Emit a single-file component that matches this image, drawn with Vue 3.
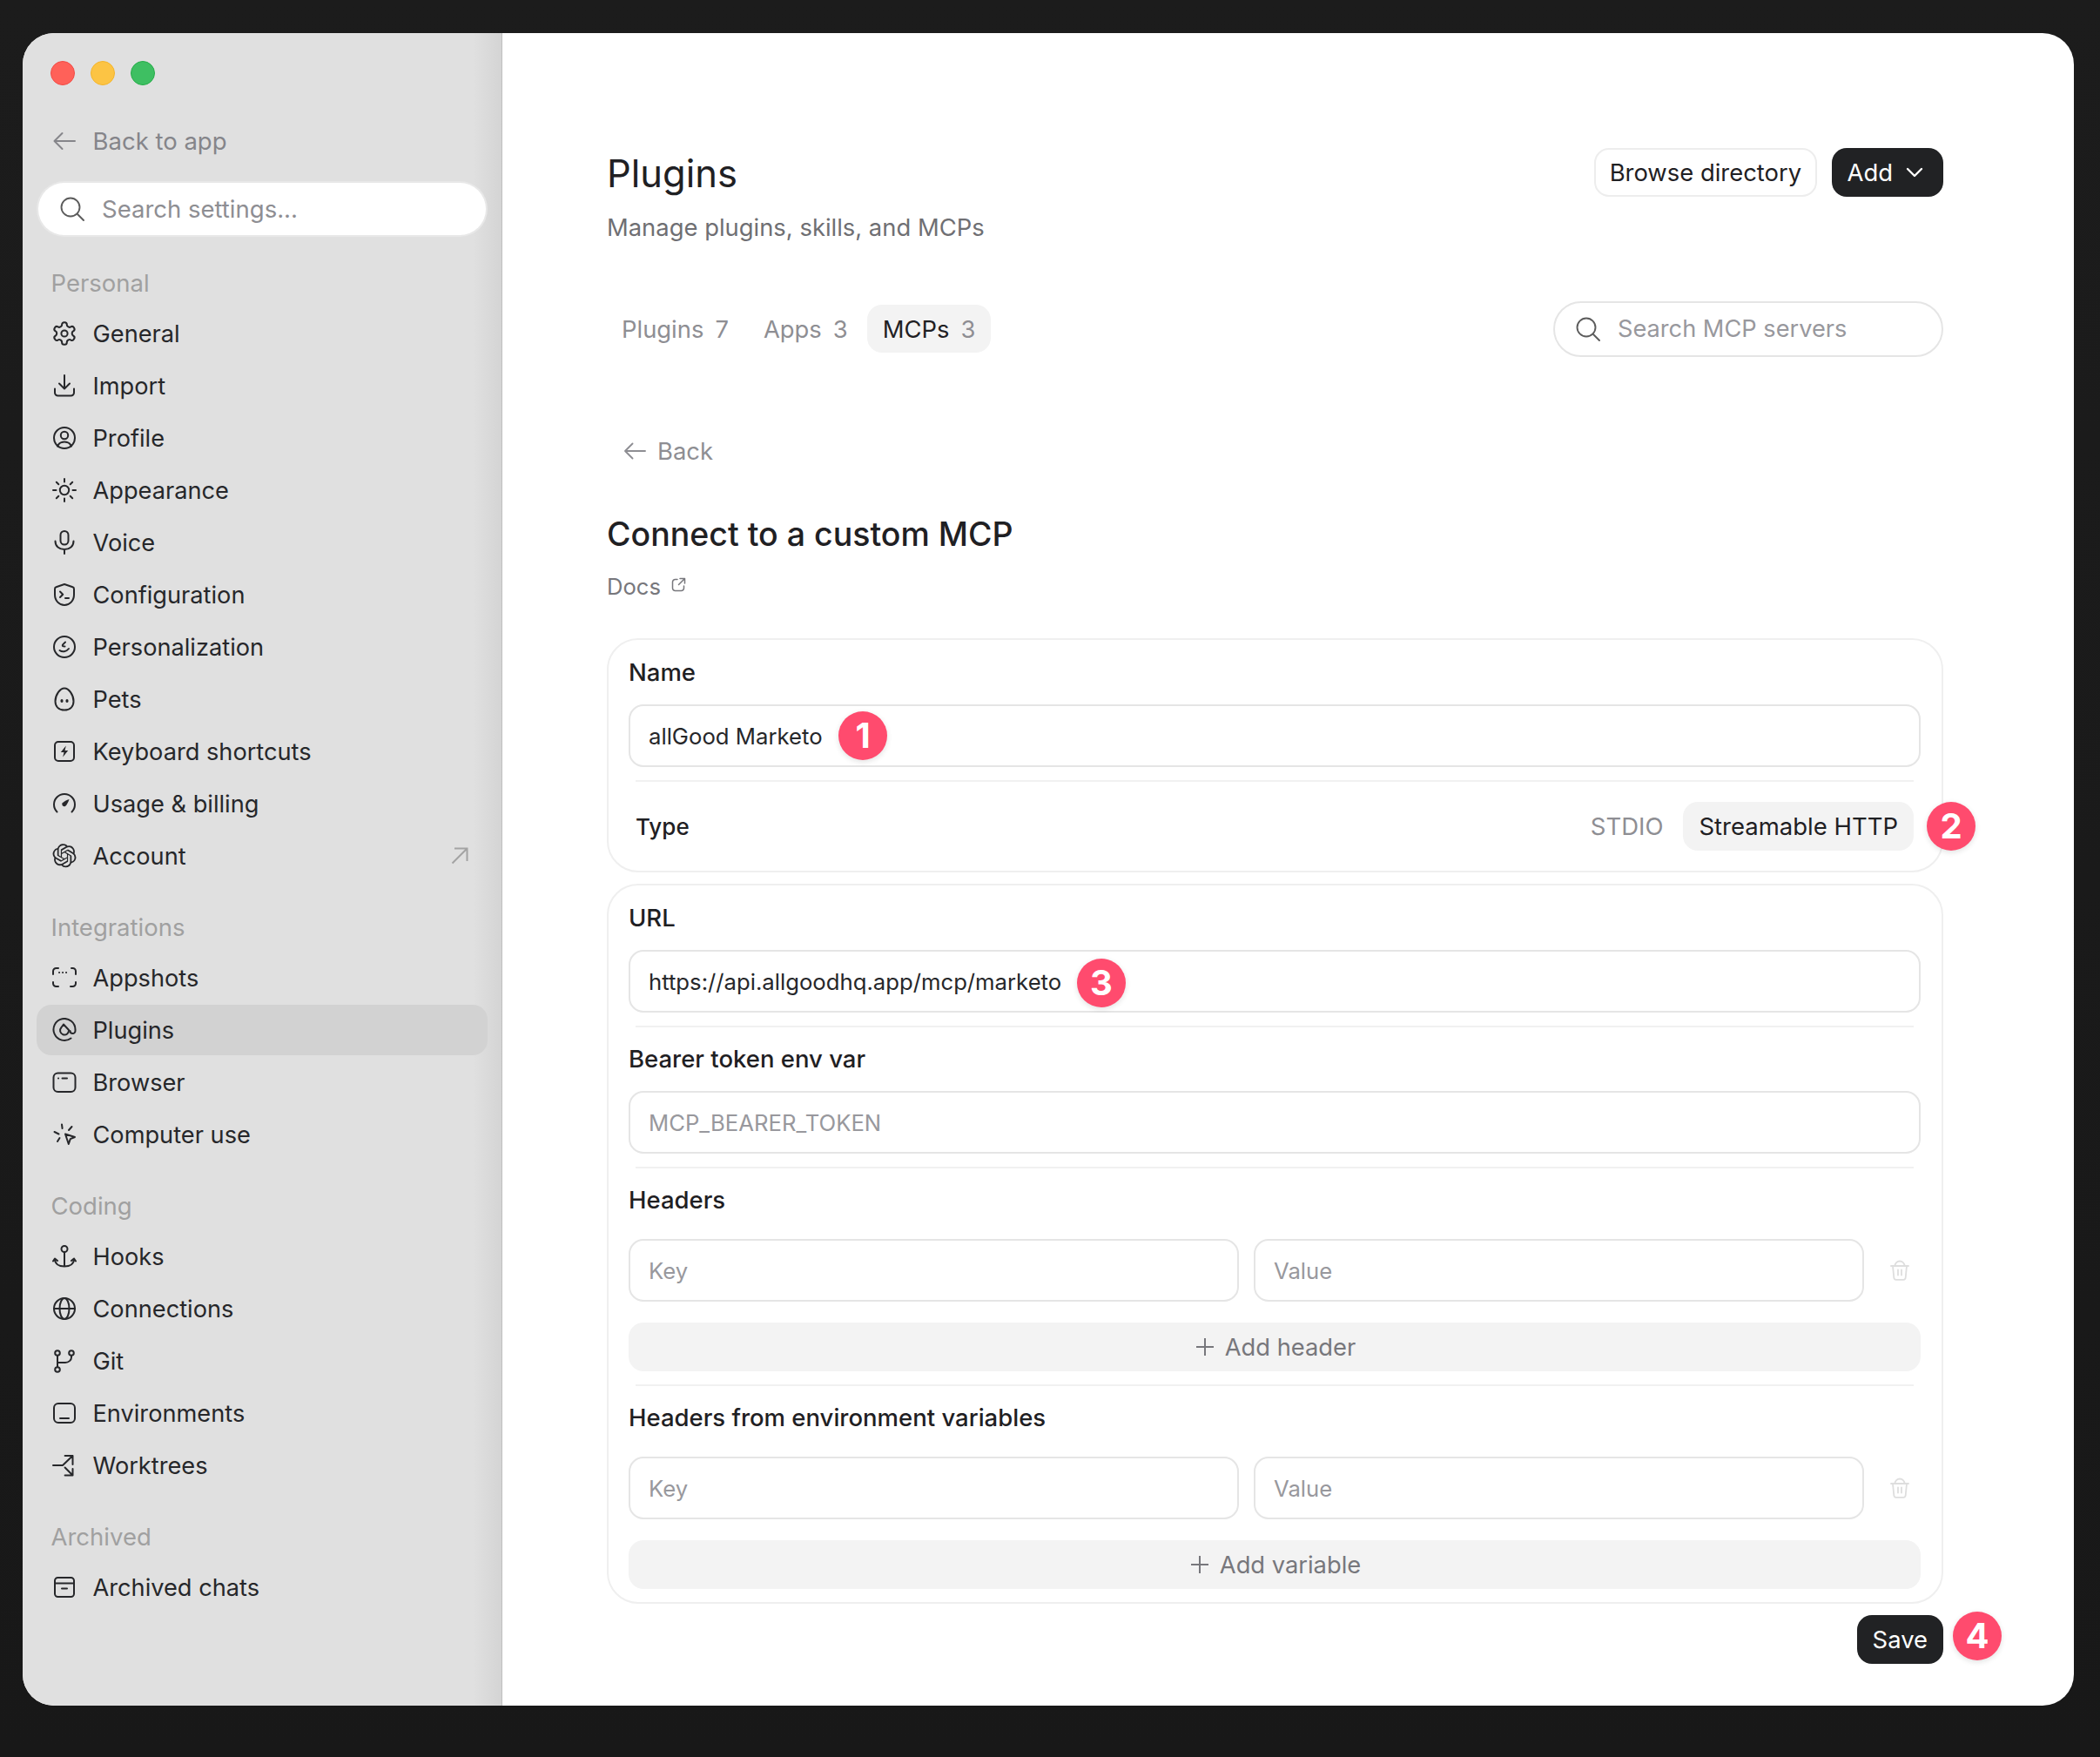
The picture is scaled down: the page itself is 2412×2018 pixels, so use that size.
<script setup>
const icons = {
  general: '<path d="M12.22 2h-.44a2 2 0 0 0-2 2v.18a2 2 0 0 1-1 1.73l-.43.25a2 2 0 0 1-2 0l-.15-.08a2 2 0 0 0-2.73.73l-.22.38a2 2 0 0 0 .73 2.73l.15.1a2 2 0 0 1 1 1.72v.51a2 2 0 0 1-1 1.74l-.15.09a2 2 0 0 0-.73 2.73l.22.38a2 2 0 0 0 2.73.73l.15-.08a2 2 0 0 1 2 0l.43.25a2 2 0 0 1 1 1.73V20a2 2 0 0 0 2 2h.44a2 2 0 0 0 2-2v-.18a2 2 0 0 1 1-1.73l.43-.25a2 2 0 0 1 2 0l.15.08a2 2 0 0 0 2.73-.73l.22-.39a2 2 0 0 0-.73-2.73l-.15-.08a2 2 0 0 1-1-1.74v-.5a2 2 0 0 1 1-1.74l.15-.09a2 2 0 0 0 .73-2.73l-.22-.38a2 2 0 0 0-2.73-.73l-.15.08a2 2 0 0 1-2 0l-.43-.25a2 2 0 0 1-1-1.73V4a2 2 0 0 0-2-2z" transform="translate(-1.4 -1.4) scale(1.28)" stroke-width="1.6"/><circle cx="14" cy="14" r="3.6"/>',
  import: '<path d="M14 2v15M8 11.5l6 6 6-6M3 17.5V22a3.5 3.5 0 0 0 3.5 3.5h15A3.5 3.5 0 0 0 25 22v-4.5"/>',
  profile: '<circle cx="14" cy="14" r="12"/><circle cx="14" cy="11" r="4.2"/><path d="M6 23.5c1.5-3.5 4.5-5 8-5s6.5 1.5 8 5"/>',
  appearance: '<circle cx="14" cy="14" r="5.2"/><path d="M14 1v3.5M14 23.5V27M1 14h3.5M23.5 14H27M4.8 4.8l2.5 2.5M20.7 20.7l2.5 2.5M4.8 23.2l2.5-2.5M20.7 7.3l2.5-2.5"/>',
  voice: '<rect x="9.5" y="1" width="9" height="15.5" rx="4.5"/><path d="M3.5 12.5c0 6 4.5 9.5 10.5 9.5s10.5-3.5 10.5-9.5M14 22v5"/>',
  config: '<path d="M14 2l9.5 3.2c1 .3 1.5 1.2 1.5 2.2V14c0 7-5 12-11 12S3 21 3 14V7.4c0-1 .5-1.9 1.5-2.2z"/><path d="M9 10.5l3.2 3.2L9 17M15 18h4"/>',
  personal: '<circle cx="14" cy="14" r="12"/><path d="M15 8.5c-1.5 1.3-3.2 2.6-3.2 3.8 0 .8 1.2 1.2 2.7 1.2M8.5 18c3 2.2 7.5 1.8 10.5-2"/>',
  pets: '<path d="M14 1.5c5 0 10.5 7.5 10.5 15 0 6.5-4.5 10-10.5 10S3.5 23 3.5 16.5C3.5 9 9 1.5 14 1.5z"/><ellipse cx="11" cy="16" rx="1.6" ry="2" fill="currentColor" stroke="none"/><ellipse cx="17" cy="16" rx="1.6" ry="2" fill="currentColor" stroke="none"/>',
  keyboard: '<rect x="3" y="3" width="22" height="22" rx="4"/><path d="M15.8 7.5l-6 7.5h3.7l-1.3 5.5 6-7.5h-3.700z" fill="currentColor" stroke="none"/>',
  usage: '<path d="M5.5 23.5A12 12 0 1 1 22.5 23.5"/><path d="M19.5 9c-3 1-6 2.5-7.7 4.2a2.5 2.5 0 0 0 3.5 3.5c1.700-1.700 3.200-4.700 4.200-7.700z" fill="currentColor" stroke="none"/>',
  account: '<path transform="translate(.5 .2) scale(1.125)" fill="currentColor" stroke="none" d="M22.2819 9.8211a5.9847 5.9847 0 0 0-.5157-4.9108 6.0462 6.0462 0 0 0-6.5098-2.9A6.0651 6.0651 0 0 0 4.9807 4.1818a5.9847 5.9847 0 0 0-3.9977 2.9 6.0462 6.0462 0 0 0 .7427 7.0966 5.98 5.98 0 0 0 .511 4.9107 6.051 6.051 0 0 0 6.5146 2.9001A5.9847 5.9847 0 0 0 13.2599 24a6.0557 6.0557 0 0 0 5.7718-4.2058 5.9894 5.9894 0 0 0 3.9977-2.9001 6.0557 6.0557 0 0 0-.7475-7.0729zm-9.022 12.6081a4.4755 4.4755 0 0 1-2.8764-1.0408l.1419-.0804 4.7783-2.7582a.7948.7948 0 0 0 .3927-.6813v-6.7369l2.02 1.1686a.071.071 0 0 1 .038.052v5.5826a4.504 4.504 0 0 1-4.4945 4.4944zm-9.6607-4.1254a4.4708 4.4708 0 0 1-.5346-3.0137l.142.0852 4.783 2.7582a.7712.7712 0 0 0 .7806 0l5.8428-3.3685v2.3324a.0804.0804 0 0 1-.0332.0615L9.74 19.9502a4.4992 4.4992 0 0 1-6.1408-1.6464zM2.3408 7.8956a4.485 4.485 0 0 1 2.3655-1.9728V11.6a.7664.7664 0 0 0 .3879.6765l5.8144 3.3543-2.0201 1.1685a.0757.0757 0 0 1-.071 0l-4.8303-2.7865A4.504 4.504 0 0 1 2.3408 7.872zm16.5963 3.8558L13.1038 8.364 15.1192 7.2a.0757.0757 0 0 1 .071 0l4.8303 2.7913a4.4944 4.4944 0 0 1-.6765 8.1042v-5.6772a.79.79 0 0 0-.407-.667zm2.0107-3.0231l-.142-.0852-4.7735-2.7818a.7759.7759 0 0 0-.7854 0L9.409 9.2297V6.8974a.0662.0662 0 0 1 .0284-.0615l4.8303-2.7866a4.4992 4.4992 0 0 1 6.6802 4.66zM8.3065 12.863l-2.02-1.1638a.0804.0804 0 0 1-.038-.0567V6.0742a4.4992 4.4992 0 0 1 7.3757-3.4537l-.142.0805L8.704 5.459a.7948.7948 0 0 0-.3927.6813zm1.0976-2.3654l2.602-1.4998 2.6069 1.4998v2.9994l-2.5974 1.4997-2.6067-1.4997Z"/>',
  appshots: '<path d="M1 10V6.500A3.500 3.500 0 0 1 4.500 3H7M22 3h1.500A3.500 3.500 0 0 1 27 6.500V10M1 19v1.500A3.500 3.500 0 0 0 4.500 24H7M21 24h2.500a3.500 3.500 0 0 0 3.500-3.500V19"/><path d="M8 8h.1M12 8h.1M16 8h.1"/>',
  plugins: '<path d="M21.500 23.500A12.500 12.500 0 1 1 26.500 13.500v1.500a3 3 0 0 1-6 0"/><path d="M13 7.500l-2.500 3.500a5 5 0 1 0 8.500 3l-6-6.500z"/>',
  browser: '<rect x="1.5" y="3.5" width="25" height="21.5" rx="5"/><path d="M7 9.500h.1M11.500 9.500h5.500"/>',
  computer: '<path d="M15 13.500l11 3.500-5.200 2.200-2 5.800z"/><path d="M11 2.500l.6 4.500M22.500 5l-3.500 4M2.500 11l5 2.500M6 22l2.500-4"/>',
  hooks: '<circle cx="14" cy="5.5" r="3.5"/><path d="M14 9v16.500M3 17c0 5 4 8.500 11 8.500s11-3.500 11-8.500M1 19.500L3 16.500l3 2.500M22 19l3-2.500 2 3"/>',
  connections: '<circle cx="14" cy="14" r="12"/><ellipse cx="14" cy="14" rx="5.5" ry="12"/><path d="M2 14h24"/>',
  git: '<circle cx="6" cy="5" r="2.8"/><circle cx="6" cy="24" r="2.8"/><circle cx="22" cy="5" r="2.8"/><path d="M6 8v13M6 16h9c4 0 7-3 7-6V8"/>',
  environments: '<rect x="2" y="3" width="24" height="22" rx="5"/><path d="M9 20h10"/>',
  worktrees: '<path d="M1 14h11L23.500 3M14.600 3h8.900v10M14.600 16.500l8.900 9M23.500 18v7.500h-8.900"/>',
  archived: '<rect x="3" y="3" width="22" height="22" rx="3.5"/><path d="M3 9.500h22M11 15.500h6"/>',
}

const groups = [
  { label: 'Personal', items: [
    { text: 'General', icon: 'general' },
    { text: 'Import', icon: 'import' },
    { text: 'Profile', icon: 'profile' },
    { text: 'Appearance', icon: 'appearance' },
    { text: 'Voice', icon: 'voice' },
    { text: 'Configuration', icon: 'config' },
    { text: 'Personalization', icon: 'personal' },
    { text: 'Pets', icon: 'pets' },
    { text: 'Keyboard shortcuts', icon: 'keyboard' },
    { text: 'Usage & billing', icon: 'usage' },
    { text: 'Account', icon: 'account', external: true },
  ] },
  { label: 'Integrations', items: [
    { text: 'Appshots', icon: 'appshots' },
    { text: 'Plugins', icon: 'plugins', active: true },
    { text: 'Browser', icon: 'browser' },
    { text: 'Computer use', icon: 'computer' },
  ] },
  { label: 'Coding', items: [
    { text: 'Hooks', icon: 'hooks' },
    { text: 'Connections', icon: 'connections' },
    { text: 'Git', icon: 'git' },
    { text: 'Environments', icon: 'environments' },
    { text: 'Worktrees', icon: 'worktrees' },
  ] },
  { label: 'Archived', items: [
    { text: 'Archived chats', icon: 'archived' },
  ] },
]

const tabs = [
  { text: 'Plugins', count: 7 },
  { text: 'Apps', count: 3 },
  { text: 'MCPs', count: 3, active: true },
]

const envSections = [
  { label: 'Headers', add: 'Add header' },
  { label: 'Headers from environment variables', add: 'Add variable' },
]
</script>

<template>
  <div class="window">
    <aside class="sidebar">
      <div class="lights">
        <span class="light red"></span>
        <span class="light yellow"></span>
        <span class="light green"></span>
      </div>

      <div class="back-app">
        <svg class="ico" viewBox="0 0 28 28"><path d="M26 14H2.500M11.500 5l-9 9 9 9" /></svg>
        <span>Back to app</span>
      </div>

      <div class="side-search">
        <svg class="search-ico" viewBox="0 0 28 28"><circle cx="12" cy="12" r="10.5" /><path d="M20 20l7 7" /></svg>
        <span>Search settings...</span>
      </div>

      <section v-for="group in groups" :key="group.label" class="group">
        <div class="group-label">{{ group.label }}</div>
        <div class="group-items">
          <div v-for="item in group.items" :key="item.text" class="nav-item" :class="{ active: item.active }">
            <svg class="ico" viewBox="0 0 28 28" v-html="icons[item.icon]"></svg>
            <span>{{ item.text }}</span>
            <svg v-if="item.external" class="ext" viewBox="0 0 20 20"><path d="M1.500 18.500L18.500 1.500M4 1.500h14.500V16" /></svg>
          </div>
        </div>
      </section>
    </aside>

    <main class="main">
      <header class="head">
        <div>
          <h1 class="title">Plugins</h1>
          <p class="subtitle">Manage plugins, skills, and MCPs</p>
        </div>
        <div class="head-actions">
          <button class="btn btn-light">Browse directory</button>
          <button class="btn btn-dark add">
            Add
            <svg class="chev" viewBox="0 0 20 12"><path d="M2 2l8 8 8-8" /></svg>
          </button>
        </div>
      </header>

      <div class="tabs-row">
        <div class="tabs">
          <div v-for="tab in tabs" :key="tab.text" class="tab" :class="{ active: tab.active }">
            <span>{{ tab.text }}</span>
            <span class="count">{{ tab.count }}</span>
          </div>
        </div>
        <div class="mcp-search">
          <svg class="search-ico" viewBox="0 0 28 28"><circle cx="12" cy="12" r="10.5" /><path d="M20 20l7 7" /></svg>
          <span>Search MCP servers</span>
        </div>
      </div>

      <div class="back">
        <svg class="back-arrow" viewBox="0 0 26 22"><path d="M25 11H2M10.500 2.500L2 11l8.500 8.500" /></svg>
        <span>Back</span>
      </div>

      <h2 class="heading">Connect to a custom MCP</h2>
      <div class="docs">
        <span>Docs</span>
        <svg class="docs-ico" viewBox="0 0 17 17"><path d="M7 2.500H4.500A3 3 0 0 0 1.500 5.500v7a3 3 0 0 0 3 3h7a3 3 0 0 0 3-3V10M10 1.500h5.500V7M15.500 1.500L8.500 8.500" /></svg>
      </div>

      <section class="card first">
        <div class="label">Name</div>
        <div class="field value">
          allGood Marketo
          <span class="badge b1">1</span>
        </div>
        <div class="divider"></div>
        <div class="type-row">
          <span class="type-label">Type</span>
          <div class="type-options">
            <span class="type-opt">STDIO</span>
            <span class="type-opt active">Streamable HTTP</span>
          </div>
        </div>
        <span class="badge b2">2</span>
      </section>

      <section class="card second">
        <div class="label">URL</div>
        <div class="field value">
          https://api.allgoodhq.app/mcp/marketo
          <span class="badge b3">3</span>
        </div>
        <div class="divider"></div>
        <div class="label after-divider">Bearer token env var</div>
        <div class="field">MCP_BEARER_TOKEN</div>
        <div class="divider"></div>
        <template v-for="(section, i) in envSections" :key="section.label">
          <div class="label after-divider">{{ section.label }}</div>
          <div class="pair">
            <div class="field">Key</div>
            <div class="field">Value</div>
            <svg class="trash" viewBox="0 0 22 24"><path d="M1 7h20M5.500 7a5.500 5.500 0 0 1 11 0M3 7l1.300 13.500a2.500 2.500 0 0 0 2.500 2.300h8.400a2.500 2.500 0 0 0 2.500-2.300L19 7M9 11.500v6M13 11.500v6" /></svg>
          </div>
          <div class="add-row">
            <svg class="plus" viewBox="0 0 20 20"><path d="M10 0v20M0 10h20" /></svg>
            {{ section.add }}
          </div>
          <div v-if="i === 0" class="divider"></div>
        </template>
      </section>

      <div class="save-row">
        <button class="btn btn-dark">Save</button>
        <span class="badge b4">4</span>
      </div>
    </main>
  </div>
</template>

<style>
body { background: linear-gradient(#1c1c1c, #181818); }
</style>

<style scoped>
.window { display: flex; box-sizing: border-box; width: 2356px; height: 1921px; margin: 38px 0 59px 26px; border-radius: 36px; overflow: hidden; background: #fff; font-family: Inter, "Noto Sans", sans-serif; color: #1f2023; }

.sidebar { box-sizing: border-box; width: 551px; flex: none; padding: 0 16px; background: linear-gradient(to right, #e0e0e0 94%, #d4d4d4); border-right: 1px solid #bfbfbf; }
.lights { display: flex; gap: 18px; padding: 32px 0 0 16px; }
.light { width: 28px; height: 28px; box-sizing: border-box; border-radius: 50%; border: 1px solid; }
.red { background: #ff6159; border-color: #f14c46; }
.yellow { background: #fcc444; border-color: #f3b42c; }
.green { background: #3ebf62; border-color: #27ac49; }

.ico { width: 28px; height: 28px; flex: none; fill: none; stroke: currentColor; stroke-width: 2; stroke-linecap: round; stroke-linejoin: round; }
.search-ico { width: 28px; height: 28px; flex: none; fill: none; stroke: #5c5c5c; stroke-width: 1.9; stroke-linecap: round; }

.back-app { display: flex; align-items: center; gap: 18.5px; height: 58px; margin-top: 35px; padding-left: 18px; font-size: 27.5px; color: #85858a; }
.side-search { display: flex; align-items: center; gap: 20px; height: 60px; margin: 19px 2.5px 0 2px; padding-left: 25px; border-radius: 30px; background: #fff; box-shadow: 0 0 0 2px #e8e8e8; font-size: 27.5px; color: #8e8e93; }

.group { margin-top: 33px; }
.side-search + .group { margin-top: 35px; }
.group-label { height: 40px; line-height: 40px; padding-left: 16.5px; margin-bottom: 9px; font-size: 27.5px; color: #a0a0a0; }
.group-items { display: flex; flex-direction: column; gap: 2px; }
.nav-item { display: flex; align-items: center; gap: 18.5px; height: 58px; padding-left: 18px; border-radius: 17px; font-size: 27.2px; color: #26272a; }
.nav-item.active { background: #d2d2d2; }
.ext { width: 20px; height: 20px; margin-left: auto; margin-right: 22px; fill: none; stroke: #a3a3a3; stroke-width: 2; }

.main { flex: 1; box-sizing: border-box; padding: 132px 150px 0 120px; }
.head { display: flex; justify-content: space-between; align-items: flex-start; }
.title { margin: 0; font-size: 43.5px; line-height: 58px; font-weight: 400; }
.subtitle { margin: 13px 0 0; font-size: 27.4px; line-height: 40px; color: #6f6f73; }
.head-actions { display: flex; gap: 17px; }

.btn { display: inline-flex; align-items: center; box-sizing: border-box; height: 56px; padding: 0 16px; border-radius: 17px; border: 2px solid transparent; font-family: inherit; font-size: 27.4px; }
.btn-light { background: #fff; border-color: #ededed; color: #1f2023; padding: 0 15.5px; }
.btn-dark { background: #212224; color: #fff; }
.add { padding-right: 21px; }
.chev { width: 20px; height: 12px; margin-left: 15px; fill: none; stroke: #fff; stroke-width: 2.4; stroke-linecap: round; stroke-linejoin: round; }

.tabs-row { display: flex; justify-content: space-between; align-items: center; height: 63px; margin-top: 65px; }
.tabs { display: flex; align-items: center; gap: 4px; margin-left: -1px; }
.tab { display: flex; align-items: center; gap: 13px; height: 55px; padding: 0 18px; border-radius: 17px; font-size: 27.4px; color: #8e8e93; }
.tab.active { background: #f3f3f3; color: #1f2023; }
.count { color: #8e8e93; }
.mcp-search { display: flex; align-items: center; gap: 20px; box-sizing: border-box; width: 448px; height: 64px; padding-left: 24px; border: 2px solid #e5e5e5; border-radius: 32px; font-size: 27.2px; color: #98989d; }

.back { display: flex; align-items: center; gap: 13px; height: 48px; margin-top: 85px; padding-left: 19px; font-size: 27.4px; color: #8e8e93; }
.back-arrow { width: 26px; height: 22px; fill: none; stroke: currentColor; stroke-width: 1.9; stroke-linecap: round; stroke-linejoin: round; }

.heading { margin: 47px 0 0; font-size: 37.5px; line-height: 50px; font-weight: 500; }
.docs { display: flex; align-items: center; gap: 12px; height: 36px; margin-top: 16px; font-size: 25.6px; line-height: 35px; color: #77777c; }
.docs-ico { width: 17px; height: 17px; margin-top: -4px; fill: none; stroke: #77777c; stroke-width: 1.5; stroke-linecap: round; stroke-linejoin: round; }

.card { position: relative; box-sizing: border-box; padding: 0 24px 0 23px; border: 2px solid #efefef; border-radius: 36px; }
.first { height: 269px; margin-top: 42px; padding-top: 20px; }
.second { height: 827px; margin-top: 13px; padding-top: 20px; }

.label { height: 36px; line-height: 34px; font-size: 27.5px; font-weight: 500; }
.label.after-divider { margin-top: 19px; }
.field { position: relative; display: flex; align-items: center; box-sizing: border-box; height: 72px; margin-top: 18px; padding-left: 21px; border: 2px solid #e5e5e5; border-radius: 17px; font-size: 25.7px; color: #98989d; }
.field.value { color: #26272a; }
.divider { height: 2px; margin: 15px 8px 0; background: #f1f1f1; }

.type-row { display: flex; justify-content: space-between; align-items: center; height: 56px; margin: 23px 8px 0; }
.type-label { font-size: 26px; font-weight: 500; }
.type-options { display: flex; align-items: center; gap: 23px; }
.type-opt { font-size: 27.5px; color: #8e8e93; }
.type-opt.active { display: flex; align-items: center; height: 56px; padding: 0 18px; border-radius: 17px; background: #f3f3f3; color: #1f2023; }

.pair { display: grid; grid-template-columns: 701px 701px 47px; gap: 17px; align-items: center; margin-top: 26px; }
.pair .field { margin-top: 0; }
.trash { width: 22px; height: 24px; justify-self: center; fill: none; stroke: #dedede; stroke-width: 1.8; stroke-linecap: round; stroke-linejoin: round; }

.add-row { display: flex; align-items: center; justify-content: center; gap: 13px; height: 56px; margin-top: 24px; padding-left: 3px; border-radius: 17px; background: #f3f3f3; font-size: 27.3px; color: #77777c; }
.plus { width: 20px; height: 20px; fill: none; stroke: #77777c; stroke-width: 2; }

.save-row { position: relative; display: flex; justify-content: flex-end; margin-top: 13px; }

.badge { position: absolute; display: flex; align-items: center; justify-content: center; width: 56px; height: 56px; border-radius: 50%; background: #ff4b6e; box-shadow: 0 2px 6px rgba(0, 0, 0, 0.12); color: #fff; font-size: 40px; font-weight: 700; line-height: 1; }
.b1 { left: 239px; top: 6px; }
.b2 { right: -39px; top: 186px; }
.b3 { left: 513px; top: 8px; }
.b4 { right: -67px; top: -4px; }
</style>
